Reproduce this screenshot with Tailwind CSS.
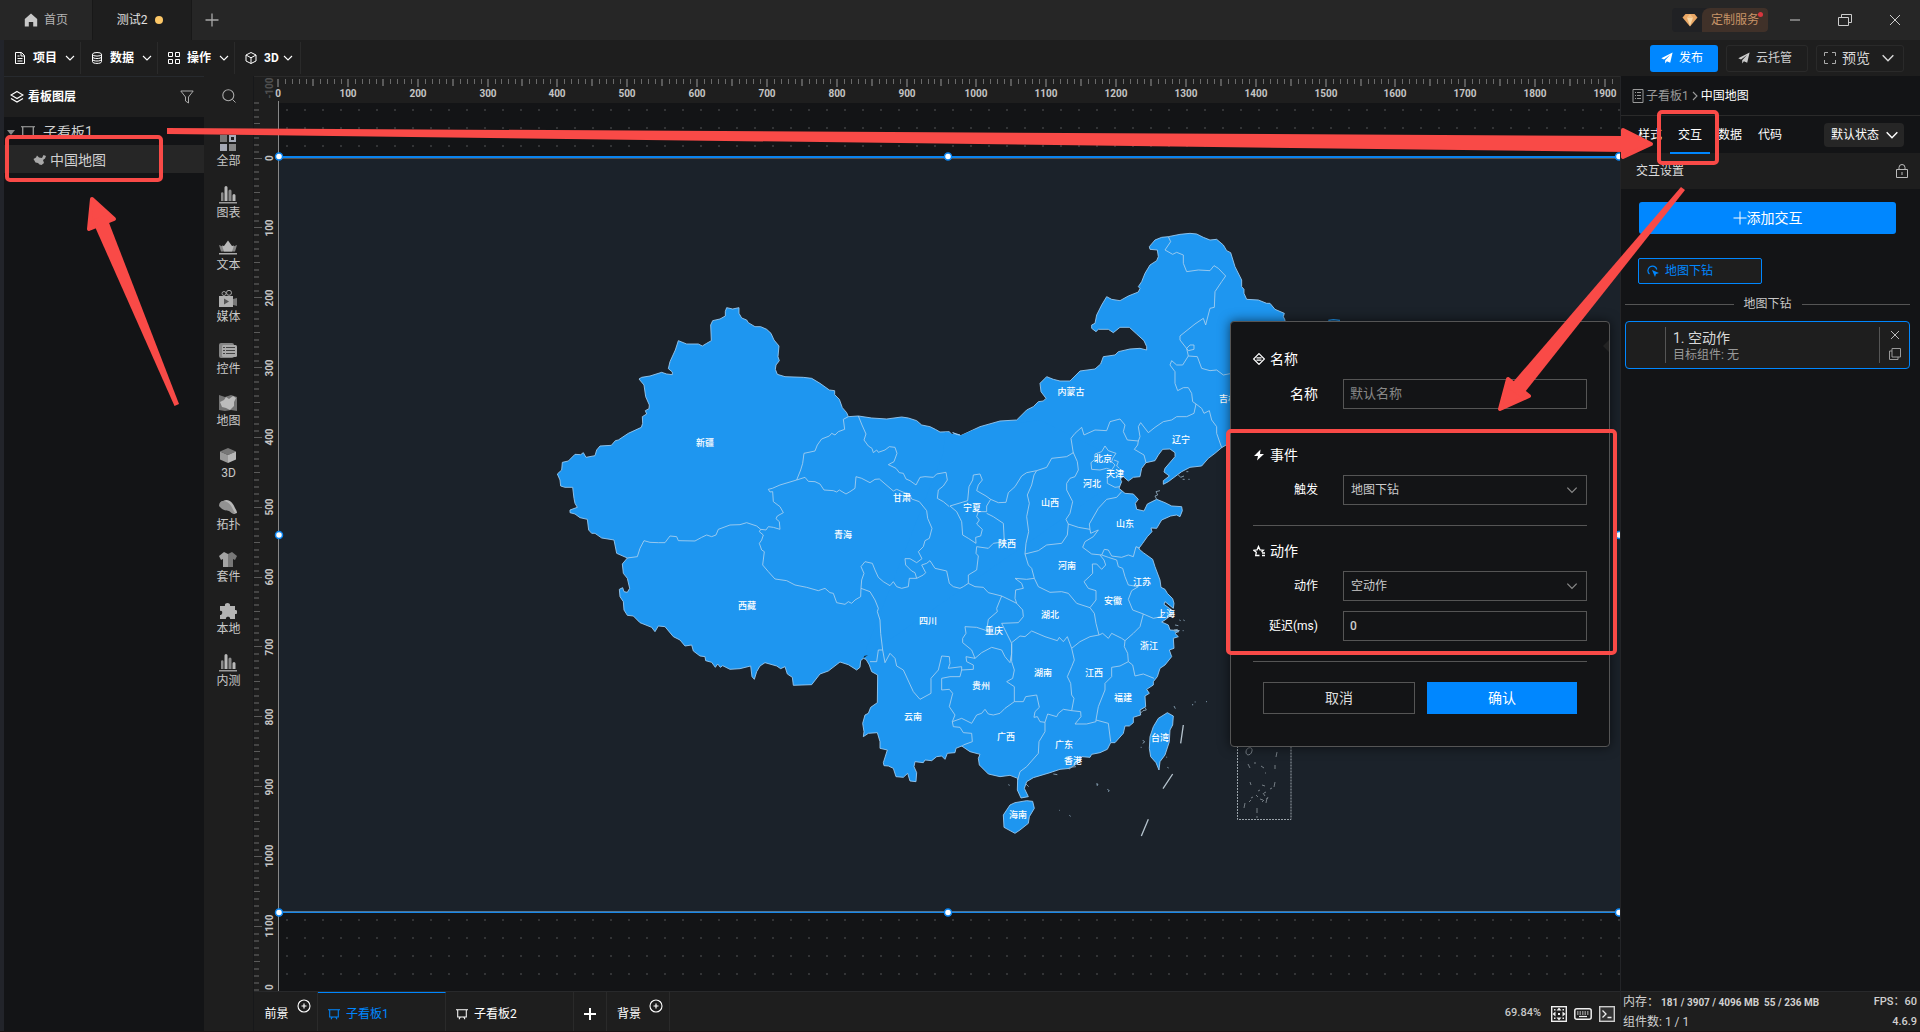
<!DOCTYPE html>
<html lang="zh-CN">
<head>
<meta charset="utf-8">
<title>测试2</title>
<script src="https://cdn.jsdelivr.net/npm/@tailwindcss/browser@4"></script>
</head>
<body class="relative flex h-screen flex-col overflow-hidden border-b border-[#1a1214] bg-[#1e1e1e] font-['Roboto','Noto_Sans_CJK_SC',sans-serif] text-xs text-[#e6e6e6]">

<svg class="hidden">
  <symbol id="chev" viewBox="0 0 12 12"><path d="M2 4l4 4 4-4" fill="none" stroke="currentColor" stroke-width="1.1"/></symbol>
  <symbol id="plane" viewBox="0 0 12 12"><path d="M11.6.5L.3 6.2l2.7 1.3L9 3 4.200 8.200v3.300l1.700-2.300 3.300 1.500z" fill="currentColor"/></symbol>
  <symbol id="board" viewBox="0 0 14 14"><path d="M0 2h14M2 2v8.500h10V2M5 10.500L3.500 13M9 10.500l1.500 2.500" fill="none" stroke="currentColor" stroke-width="1.200"/></symbol>
  <symbol id="plusring" viewBox="0 0 14 14"><circle cx="7" cy="7" r="6" fill="none" stroke="currentColor" stroke-width="1.100"/><path d="M7 4.500v5M4.500 7h5" stroke="currentColor" stroke-width="1.200"/></symbol>
  <symbol id="bars" viewBox="0 0 18 18"><path d="M0 16h18v1.500H0z" fill="#9a9a9a"/><path d="M2 15V7.500a1 1 0 0 1 2.500 0V15zM9.500 15V5a1 1 0 0 1 3 0v10z" fill="#8a8a8a"/><path d="M5.500 15V1.500a1.300 1.300 0 0 1 3 0V15zM13.500 15V9.500a1.200 1.200 0 0 1 3 0V15z" fill="#b8b8b8"/></symbol>
</svg>

<!-- Title bar -->
<header class="flex h-10 shrink-0 items-stretch bg-[#262626]">
  <button class="flex w-[92px] items-center justify-center gap-1.5 text-[#b4b4b4]">
    <svg class="size-3.5" viewBox="0 0 14 14"><path d="M7 .5L.8 6v7.500h4V9h4.400v4.500h4V6z" fill="#c8c8c8"/></svg>首页
  </button>
  <button class="flex w-[100px] items-center justify-center gap-2 border-x border-[#181818] bg-[#1e1e1e] pr-1 text-[#e0e0e0]">
    测试2<span class="size-2 rounded-full bg-[#fcc767]"></span>
  </button>
  <button aria-label="新建" class="flex w-10 items-center justify-center text-[#a8a8a8]">
    <svg class="size-3.5" viewBox="0 0 14 14"><path d="M7 .5v13M.5 7h13" stroke="currentColor" stroke-width="1.300"/></svg>
  </button>
  <div class="ml-auto flex items-center">
    <a href="#" class="relative mr-0.5 flex h-6 items-center overflow-hidden rounded bg-[#202124] text-[#c89468]">
      <svg class="mr-1 ml-2.5 h-3.5 w-4" viewBox="0 0 16 14"><path d="M3.500 1h9L15.500 4.500 8 13.500.5 4.500z" fill="#e9a765"/><path d="M5 4.500h6L8 13z" fill="#f9d7a5"/><path d="M5 4.500L8 1l3 3.500z" fill="#f4c083"/></svg>
      <span class="flex h-6 w-[66px] items-center justify-center rounded-tl-lg bg-[#403129]">定制服务</span>
      <span class="absolute top-1 right-[5px] size-[5px] rounded-full bg-[#d9363e]"></span>
    </a>
    <button aria-label="最小化" class="flex w-[50px] justify-center"><svg class="size-3" viewBox="0 0 12 12"><path d="M1 6h10" stroke="#ccc"/></svg></button>
    <button aria-label="还原" class="flex w-[50px] justify-center"><svg class="size-4" viewBox="0 0 16 16"><path d="M1.500 5.500h10v8h-10zM4.500 5.500v-3h10v8h-3" fill="none" stroke="#ccc"/></svg></button>
    <button aria-label="关闭" class="flex w-[50px] justify-center"><svg class="size-3" viewBox="0 0 12 12"><path d="M1 1l10 10M11 1L1 11" stroke="#ccc"/></svg></button>
  </div>
</header>

<!-- Menu bar -->
<nav class="flex h-9 shrink-0 items-center border-l-4 border-[#22242a]">
  <button class="flex h-8 w-[77px] items-center gap-[7px] border-r border-[#2a2a2a] pl-2.5 font-bold text-white">
    <svg class="size-3" viewBox="0 0 12 12"><path d="M1.500.5h6l3 3v8h-9zM7 .5V4h3.500M3.500 4h2M3.500 6.500h5M3.500 9h5" fill="none" stroke="currentColor"/></svg>项目<svg class="size-3"><use href="#chev"/></svg>
  </button>
  <button class="flex h-8 w-[77px] items-center gap-[7px] border-r border-[#2a2a2a] pl-2.5 font-bold text-white">
    <svg class="size-3" viewBox="0 0 12 12"><g fill="none" stroke="currentColor"><ellipse cx="6" cy="2.300" rx="4.500" ry="1.800"/><path d="M1.500 2.300v7.400c0 2.300 9 2.300 9 0V2.300M1.500 4.800c0 2.300 9 2.300 9 0M1.500 7.300c0 2.300 9 2.300 9 0"/></g></svg>数据<svg class="size-3"><use href="#chev"/></svg>
  </button>
  <button class="flex h-8 w-[77px] items-center gap-[7px] border-r border-[#2a2a2a] pl-2.5 font-bold text-white">
    <svg class="size-3" viewBox="0 0 12 12"><path d="M.5.5h4v4h-4zM7.500.5h4v4h-4zM.5 7.500h4v4h-4zM7.500 7.500h4v4h-4z" fill="none" stroke="currentColor"/></svg>操作<svg class="size-3"><use href="#chev"/></svg>
  </button>
  <button class="flex h-8 w-[66px] items-center gap-[7px] border-r border-[#2a2a2a] pl-2.5 font-bold text-white">
    <svg class="size-3" viewBox="0 0 12 12"><path d="M6 .5L11 3v6l-5 2.500L1 9V3zM1 3l5 2.800L11 3M6 5.800v5.700" fill="none" stroke="currentColor"/></svg>3D<svg class="-ml-1 size-3"><use href="#chev"/></svg>
  </button>
  <div class="mr-4 ml-auto flex gap-2">
    <button class="flex h-[27px] w-[68px] items-center justify-center gap-1.5 rounded-[3px] bg-[#0087ff] pr-1 text-white"><svg class="size-3"><use href="#plane"/></svg>发布</button>
    <button class="flex h-[27px] w-[82px] items-center justify-center gap-1.5 rounded-[3px] border border-[#2a2a2a] pr-1 text-[#ccc]"><svg class="size-3"><use href="#plane"/></svg>云托管</button>
    <button class="flex h-[27px] w-[88px] items-center justify-center gap-1.5 rounded-[3px] border border-[#2a2a2a] text-sm text-[#d8d8d8]"><svg class="size-3" viewBox="0 0 12 12"><path d="M.5 4V.5H4M8 .5h3.500V4M11.500 8v3.500H8M4 11.500H.5V8" fill="none" stroke="#aaa"/></svg>预览<svg class="ml-1 size-4"><use href="#chev"/></svg></button>
  </div>
</nav>

<div class="flex min-h-0 flex-1">
  <!-- Layers panel -->
  <aside class="w-[204px] shrink-0 border-l-4 border-[#22242a] bg-[#131416]">
    <div class="flex h-[41px] items-center border-t border-[#272a2e] bg-[#1e1e1e] px-1.5 font-bold text-white">
      <svg class="mr-1 size-3.5" viewBox="0 0 14 14"><path d="M7 1.500l6 3.500-6 3.500L1 5zM1 8.500L7 12l6-3.500" fill="none" stroke="currentColor" stroke-width="1.200"/></svg>看板图层
      <svg class="mr-1 ml-auto size-3.5" viewBox="0 0 14 14"><path d="M.8 1h12.400L8.500 7v6l-3-2V7z" fill="none" stroke="#aaa"/></svg>
    </div>
    <ul class="text-sm text-[#d0d0d0]">
      <li class="flex h-7 items-center pt-0.5 pl-[3px]"><svg class="mr-1.5 size-2" viewBox="0 0 8 8"><path d="M0 2h8L4 7z" fill="#888"/></svg><svg class="mr-2 size-3.5" viewBox="0 0 12 12"><path d="M0 1.500h12M1.500 1.500v8h9v-8M4 10l-1 2M8 10l1 2" fill="none" stroke="#aaa"/></svg>子看板1</li>
      <li class="flex h-7 items-center gap-[3px] bg-[#262626] pt-0.5 pl-[29px]"><svg class="size-3.5" viewBox="0 0 14 12"><path d="M.5 5l2.500-1.500L4 1.500l2 2 3 .5 1.500-3L13 2l-1 2.500-2 1.500 1 3-2.500 2-2-.5L5 9 2.500 8.500z" fill="#a8a8a8"/></svg>中国地图</li>
    </ul>
  </aside>

  <!-- Component categories -->
  <nav class="flex w-[50px] shrink-0 flex-col items-center border-r border-[#17181a] text-[#c8c8c8]">
    <button aria-label="搜索" class="flex h-10 items-center"><svg class="size-3.5" viewBox="0 0 14 14"><circle cx="6.300" cy="6.300" r="5.500" fill="none" stroke="#aaa" stroke-width="1.100"/><path d="M10.500 10.500l3 3" stroke="#aaa"/></svg></button>
    <div class="mt-[18px] flex flex-col">
      <a href="#" class="flex h-[52px] flex-col items-center"><svg class="mb-px size-[18px]" viewBox="0 0 18 18"><path d="M1 1h7v7H1z" fill="#777"/><path d="M11 2h5v5h-5z" fill="#1e1e1e" stroke="#a8adba" stroke-width="2"/><path d="M1 10h7v7H1z" fill="#a4a8b4"/><path d="M10 10h7v7h-7z" fill="#888"/></svg>全部</a>
      <a href="#" class="flex h-[52px] flex-col items-center"><svg class="mb-px size-[18px]"><use href="#bars"/></svg>图表</a>
      <a href="#" class="flex h-[52px] flex-col items-center"><svg class="mb-px size-[18px]" viewBox="0 0 18 18"><path d="M0 7l5 2 8 0 5-2-2 6.500H2z" fill="#858585"/><path d="M9 2.500l4 5.500 2-.5-2 6H5L3 7.500l2 .5z" fill="#b8b8b8"/><path d="M0 15h18v1.500H0z" fill="#aaa"/></svg>文本</a>
      <a href="#" class="flex h-[52px] flex-col items-center"><svg class="mb-px size-[18px]" viewBox="0 0 18 18"><circle cx="5" cy="3.500" r="2" fill="none" stroke="#999"/><circle cx="10" cy="2.800" r="2.500" fill="none" stroke="#aaa"/><path d="M0 6h14v11H0z" fill="#b0b0b0"/><path d="M14 9l4-1v8l-4-1z" fill="#777"/><path d="M5 8.500v6l5-3z" fill="#555"/></svg>媒体</a>
      <a href="#" class="flex h-[52px] flex-col items-center"><svg class="mb-px size-[18px]" viewBox="0 0 18 18"><rect y="1" width="15" height="15" rx="2" fill="#858585"/><rect x="3" y="3" width="15" height="12" rx="1.500" fill="#aaa"/><path d="M4 5.500h2M7 5.500h9M4 8.500h2M7 8.500h9M4 11.500h2M7 11.500h9" stroke="#444"/></svg>控件</a>
      <a href="#" class="flex h-[52px] flex-col items-center"><svg class="mb-px size-[18px]" viewBox="0 0 18 18"><path d="M0 1l6 2 6-2 6 2v14l-6-1-6 1-6-1z" fill="#747474"/><path d="M1 8l4-2 2-3 3 2 4-3 3 2-2 4 0 4-4 4-4-2-4-1z" fill="#bcbcbc"/></svg>地图</a>
      <a href="#" class="flex h-[52px] flex-col items-center"><svg class="mb-px size-[18px]" viewBox="0 0 18 18"><path d="M9 2l8 3.500L9 9 1 5.500z" fill="#777"/><path d="M1 5.500L9 9v8l-8-3.500z" fill="#999"/><path d="M17 5.500L9 9v8l8-3.500z" fill="#b8b8b8"/></svg>3D</a>
      <a href="#" class="flex h-[52px] flex-col items-center"><svg class="mb-px size-[18px]" viewBox="0 0 18 18"><path d="M4 3c6-3 10 2 12 7 1 2 2 3 2 5l-3 1L2 4z" fill="#b8b8b8"/><path d="M0 8c0-5 4-6 8-4 4 2 5 6 8 11-3 2-4-1-6-2-3-1-6 0-10-5z" fill="#929292"/></svg>拓扑</a>
      <a href="#" class="flex h-[52px] flex-col items-center"><svg class="mb-px size-[18px]" viewBox="0 0 18 18"><path d="M5 2l4 2v13H4V9L2 10 0 6z" fill="#a4a4a4"/><path d="M13 2L9 4v13h5V9l2 1 2-4z" fill="#787878"/></svg>套件</a>
      <a href="#" class="flex h-[52px] flex-col items-center"><svg class="mb-px size-[18px]" viewBox="0 0 18 18"><path d="M1 4h5c-1-4 6-4 5 0h5v4c3-1 3 5 0 4v5h-5c1-3-5-3-4 0H1v-4c3 0 3-5 0-4z" fill="#b4b4b4"/></svg>本地</a>
      <a href="#" class="flex h-[52px] flex-col items-center"><svg class="mb-px size-[18px]"><use href="#bars"/></svg>内测</a>
    </div>
  </nav>

  <!-- Canvas column -->
  <main class="relative flex min-w-0 flex-1 flex-col">
    <div class="relative min-h-0 flex-1 overflow-hidden border-t border-[#2a2a2a]">
      <svg class="absolute -top-px left-0 h-[915px] w-[1366px]" viewBox="254 76 1366 915">
        <defs>
          <pattern id="dots" x="286" y="109" width="18" height="18" patternUnits="userSpaceOnUse"><rect width="2" height="2" fill="#333436"/></pattern>
        </defs>
        <rect x="278" y="103" width="1342" height="888" fill="#131416"/>
        <rect x="278" y="103" width="1342" height="888" fill="url(#dots)"/>
        <rect x="278" y="156" width="1342" height="757" fill="#1b222a"/>
        <path d="M278 158.500h1342" stroke="#555"/>
        <path d="M278 157h1342" stroke="#0a84f0" stroke-width="2"/>
        <path d="M278 911.500h1342" stroke="#4f7699"/>
        <path d="M278 912.500h1342" stroke="#1787e8"/>
        <g id="ruler" class="font-['Roboto',sans-serif] text-[10px] font-bold" fill="#c4c4c4" text-anchor="middle"></g>
        <path d="M278.500 101v890" stroke="#888"/>

        <!-- Map of China -->
        <g stroke="#9ccdf5" stroke-width="2.600" stroke-linejoin="round" fill="#1e96f0">
          <g transform="translate(540 290) scale(.33333)">
            <path d="M1260,435 1235,434 1228,425 1200,426 1186,418 1170,410 1145,405 1130,392 1105,384 1085,381 1040,387 995,384 955,378 925,380 920,368 907,353 898,328 884,314 884,302 868,300 840,280 815,265 790,262 735,260 712,253 706,238 708,225 718,212 714,200 717,168 702,150 693,130 680,118 662,110 645,110 625,98 620,90 605,84 597,70 597,53 578,57 560,53 556,64 556,78 540,87 518,92 512,105 514,152 500,160 487,168 475,162 440,162 415,152 406,180 390,215 385,236 397,246 397,254 380,252 365,247 330,258 305,262 297,267 312,285 317,320 328,345 327,356 316,362 320,372 307,380 308,400 304,412 265,430 235,450 226,452 214,466 180,468 170,480 165,497 138,502 130,488 122,494 105,493 85,513 67,517 65,540 52,552 60,570 62,588 75,592 98,592 102,625 105,640 112,652 90,660 90,668 105,672 120,683 142,688 146,720 155,730 165,730 185,744 222,750 230,790 262,804 247,822 250,850 262,865 269,895 262,907 252,905 248,893 238,898 240,920 250,935 252,960 262,976 280,978 300,998 335,1012 345,1025 355,1008 375,1010 400,1040 420,1050 435,1068 455,1065 460,1083 480,1098 495,1100 497,1112 515,1117 526,1132 533,1122 541,1132 548,1127 570,1138 600,1136 632,1128 636,1160 643,1168 650,1145 660,1128 675,1118 710,1128 722,1136 735,1130 742,1152 757,1162 760,1186 815,1184 840,1152 865,1143 900,1116 925,1124 950,1140 960,1132 962,1112 970,1105"/>
          </g>
          <g transform="translate(1040 220) scale(.33333)">
            <path d="M-240,645 -262,638 -240,648 -180,620 -120,603 -70,600 -40,570 -20,560 -5,545 10,543 18,535 3,515 0,490 20,470 40,478 60,483 90,483 120,453 165,447 182,432 190,410 225,405 235,395 270,387 300,385 320,390 320,380 312,362 290,342 268,322 240,322 220,338 205,328 175,328 168,335 155,325 155,315 165,310 170,285 185,255 200,230 215,238 240,242 265,228 295,216 300,205 295,200 305,185 315,160 330,135 350,122 355,110 352,90 330,88 328,80 345,60 365,52 385,50 420,43 450,40 470,42 490,52 510,60 530,58 550,75 560,92 572,98 585,140 605,180 605,200 612,208 612,220 620,238 655,240 680,250 690,250 705,268 733,280 730,290 735,300 735,500 600,650 545,683 525,700 505,715 485,738 450,742 425,755 405,770 385,785 370,793 370,782 388,768 372,756 375,745 405,710 405,698 390,687 368,688 355,705 345,722 318,728 305,745 300,770 280,772 265,783 250,770 240,775"/>
          </g>
          <g transform="translate(860 420) scale(.33333)">
            <path stroke="none" d="M10,708 250,100 255,36 300,47 340,30 540,0 740,100 785,175 700,400 60,700z"/>
            <path d="M780,175 785,185 777,205 795,220 820,222 835,238 826,250 830,268 852,273 862,252 890,238 915,248 935,258 965,260 967,272 960,290 950,285 932,288 905,300 890,325 873,324 876,335 862,350 848,370 836,386 850,398 878,418 885,440 900,480 903,502 915,508 922,520 938,536 942,550 940,565 915,545 912,553 942,575 940,580 915,600 905,606 925,615 930,630 958,632 945,640 955,650 940,655 942,685 928,690 935,710 915,735 900,745 892,770 880,785 880,795 860,808 868,820 855,828 857,860 840,870 842,885 820,892 820,908 808,918 795,918 790,940 765,968 752,968 742,988 720,998 695,1003 690,1012 665,1010 660,1025 630,1045 600,1048 570,1058 520,1073 500,1085 493,1105 505,1130 483,1134 472,1110 473,1075 450,1066 420,1070 385,1062 358,1035 355,1015 360,1003 330,995 305,978 288,985 285,998 262,1000 255,1018 245,1008 230,1010 215,1022 195,1020 190,1028 165,1025 162,1040 170,1058 168,1085 150,1083 143,1060 130,1072 108,1070 100,1045 85,1038 72,1037 70,1028 82,990 60,985 60,965 52,938 25,940 10,950 12,935 8,910 15,885 25,880 32,862 52,848 53,765 35,755 28,735 18,718 10,715"/>
            <path d="M500,1142 518,1144 523,1165 508,1190 505,1210 480,1230 465,1240 432,1222 430,1185 450,1155 465,1148z"/>
            <path d="M922,878 940,888 938,915 930,930 928,965 915,1005 900,1025 897,1050 888,1028 872,1010 868,985 870,950 880,920 895,895z"/>
            <path fill="none" stroke="#b4c2cc" stroke-width="4" d="M970,915 962,970M938,1062 909,1106M865,1198 844,1248"/>
            <g fill="none" stroke="#8fa9bd">
              <path d="M890,238 885,228 893,225 888,215 900,212M955,165 962,172 972,168M968,178l6,0M985,178l4,0M985,155l-6,0M958,600l4,2M970,600l4,2M945,615l10,2M942,630l10,-2 4,8 -10,0zM968,632l3,0M942,858l4,8M998,852l0,4M1004,846l3,0M1038,845l3,0M848,960l6,6 -6,4M842,982l3,0M920,1010l0,3M922,1042l4,2M708,1092l6,0 -3,6M742,1108l6,4 -4,3M628,1186l4,3M598,1171l2,0M580,1062l12,2M628,1048l0,-6 20,-2M498,1092l8,8M445,1094l4,2M855,862l4,8 -10,2 -8,8"/>
            </g>
          </g>
        </g>
        <!-- Province borders -->
        <g fill="none" stroke="#a9cfee" stroke-width="2.600" stroke-linejoin="round">
          <path transform="translate(540 290) scale(.33333)" d="M925,380 910,388 914,418 895,425 885,435 875,430 868,438 845,447 832,465 825,483 792,490 788,520 782,540 770,570M770,570 720,585 697,595 685,598 690,606 698,605 700,635 720,650 730,668 712,678 708,686 718,695 720,718 700,712 685,710 678,720 662,718M955,378 966,405 978,432 972,450 985,468 996,475 1000,488 1010,480 1015,487 1035,480 1048,470 1065,472 1071,490 1062,515 1045,524 1068,535 1078,548 1090,550 1098,567 1110,572 1128,585 1140,562 1155,560 1180,562 1190,552 1218,547 1222,570 1210,588 1195,600 1192,625 1210,635 1228,650M770,570 795,562 805,574 825,575 840,582 852,600 880,602 890,606 898,600 918,612 930,605 945,595 948,560 965,565 990,578 1005,568 1018,567 1060,603 1070,598 1110,615 1115,627 1138,635 1160,662 1163,685 1176,715 1168,745 1155,752 1150,770 1135,785 1146,806 1130,818 1110,806 1095,806 1097,825 1115,843 1125,848 1130,865 1150,855 1157,848 1145,825 1160,820 1170,812 1185,835 1220,843 1228,880 1240,890 1260,895M662,718 650,708 620,698 600,704 570,705 535,718 528,735 515,740 500,735 485,742 465,753 415,752 410,740 390,738 375,758 355,758 330,757 312,752 300,775 292,800 262,804M662,718 658,725 670,735 665,750 658,760 665,780 673,785 668,825 685,845 705,867 740,872 765,885 800,892 835,902 855,895 870,908 880,910 890,938 915,943 925,935 935,940 945,930 962,920 963,895M963,895 965,870 972,850 963,830 975,815 997,820 1005,840 1015,862 1030,875 1050,887 1060,875 1070,890 1085,895 1105,890 1108,865 1130,865M963,895 990,905 1005,930 1015,955 1012,965 1020,990 1022,1030 1028,1080M1028,1080 1015,1080 1010,1115 990,1115"/>
          <path transform="translate(860 420) scale(.33333)" d="M270,258 323,242 327,200 338,180 340,165 360,162 367,180 355,195 350,212 378,228 392,238 380,258 380,275 355,275 350,290 358,300 350,312 367,328 362,348 347,352 348,370 325,355 308,345 305,305 290,275 270,258M392,238 415,248 438,247 445,218 465,200 485,168 500,158 530,152M530,152 522,165 515,195 502,225 508,250 500,290 506,335 498,370 495,402M530,152 560,142 575,115 620,110 640,98M380,280 400,290 430,310 433,365 400,370 385,385 350,380 348,400 355,408 350,450 325,465 325,490M300,505 310,500 325,490 345,500 370,502 385,518 425,528 450,540 470,550M470,550 465,535 467,510 490,505 485,490 465,475 500,478 523,475M495,402 505,435 515,445 523,475M495,402 535,392 560,375 605,370 622,345 625,312M640,98 652,125 655,150 645,170 630,175 620,190 620,210 638,245 630,280 618,298 625,312M625,312 655,322 690,328 688,312 715,265 740,238 770,232 785,215M690,328 692,340 715,330 700,350 675,365 668,382 695,402 725,405M725,405 733,388 745,390 755,408 785,412 805,405 820,410 828,380 840,385M523,475 535,500 570,517 605,515 625,520 650,550 690,563M690,563 708,540 708,512 685,505 672,485 688,470 698,460 697,432 710,432 725,448 737,435 732,420 720,405M725,405 745,412 770,420 775,440 788,445 795,470 805,495 835,500 815,512 805,538 818,570 850,582M850,582 880,595 905,590 915,578M850,582 840,620 820,640 795,662M690,563 703,580 708,610 717,645M717,645 728,640 745,655 755,640 785,655 795,662M717,645 690,650 660,665 635,685M635,685 622,650 610,665 598,652 592,662 555,650 515,633 495,650 480,648 455,668M470,550 488,570 490,590 475,608 425,610 455,670 455,700 450,728 435,710 425,690 395,682 365,698 345,715 335,690 308,668 308,655 318,640 315,620 350,622 380,632 385,598 412,575 410,565 425,528M795,662 793,680 803,700 805,725M805,725 818,735 825,768 850,762 882,775M805,725 780,738 755,742 755,770 735,790 735,810 715,860 708,900M635,685 643,720 635,740 622,770 632,790 635,825 642,835 635,872M635,872 662,875 663,890 645,912 680,912 708,905 708,900M708,900 745,910 752,965M635,872 610,868 595,880 590,890 563,882 555,907M555,907 540,905 532,890 522,892 525,875 538,862 530,825 497,830 490,845 463,845M455,670 455,725 463,750 458,775 440,785 463,800 463,845M463,845 435,865 420,880 400,885 385,882 375,868 365,880 350,885 335,910 305,895 277,905M555,907 555,935 537,965 535,1000 500,1040 480,1055 473,1080M277,905 280,920 300,922 310,938 335,940 337,965 310,975 305,980M277,905 285,885 268,860 278,820 268,808 245,810 245,775 270,770 300,770 305,750M305,750 340,748 340,735 320,725 318,710 345,715M68,690 75,728 90,700 105,715 110,738 130,750 160,815 180,838 213,820 213,775 235,750 245,708 268,710 270,730 265,745 305,740 305,750M735,78 745,92 768,100 758,115 755,125 765,135 755,150 740,145 720,150 695,148 693,128 705,118 705,102 725,95 735,78M762,120 775,125 770,138 778,145M742,165 742,190 765,202 780,200"/>
          <path transform="translate(1040 220) scale(.33333)" d="M100,700 93,655 105,640 125,622 132,645 165,630 200,632 210,605 240,597 255,615 250,635 262,660 295,663 293,675 283,688 312,705 318,728M295,663 300,650 295,620 302,608 325,638 345,622 370,605 395,600 410,590 440,590 462,580 468,552M468,552 485,565 492,580 508,572 515,600 530,620 530,640 545,683M468,552 458,545 455,520 445,503 430,503 413,512 405,490 405,455 390,435 395,422 410,435 428,435 445,408M445,408 472,410 485,445 510,452 530,450 550,465 575,460M445,408 440,385 450,375 462,375 462,388 445,392 420,360 420,348 465,312 490,295 497,315 510,265 523,262 525,215 545,185 557,168 535,145 522,137 510,152 475,150 440,155 430,130 430,105 410,97 398,103 375,90 392,65 385,50"/>
          <path transform="translate(1040 220) scale(.33333)" stroke="#1e96f0" stroke-width="4" d="M865,301 880,299 900,301"/>
        </g>
        <!-- Inset of the South China Sea -->
        <g fill="none" stroke="#9aa3aa">
          <path d="M1237.500 740v79.500h53.500V740" stroke-dasharray="2 1"/>
          <path d="M1246 752c0-5 7-6 6-1s-6 5-6 1M1277 752l-1 5M1248 764l2 4M1275 765v4M1250 782l1 3M1275 782l-1 5M1245 803l-1 5M1257 808v5M1256 817h2M1254 763h2M1261 766l3 2M1265 773h1M1262 785l3 1M1258 791l2-1M1263 793l2 3M1251 798l2-1M1256 795l2 2M1260 799l3 1M1249 802l2-2M1262 802l2-2M1267 799l1-2M1264 793l2-1M1270 789l2-1M1266 803l1-5" opacity=".7"/>
        </g>
        <g id="provinces" class="font-['Noto_Sans_CJK_SC',sans-serif] text-[9px] font-medium" fill="#fff" text-anchor="middle"></g>

        <g fill="#fff" stroke="#0a84f0" stroke-width="1.500">
          <circle cx="279" cy="156.500" r="3.500"/><circle cx="948" cy="156.500" r="3.500"/><circle cx="1619" cy="156.500" r="3.500"/>
          <circle cx="279" cy="535" r="3.500"/><circle cx="1619" cy="535" r="3.500"/>
          <circle cx="279" cy="912.500" r="3.500"/><circle cx="948" cy="912.500" r="3.500"/><circle cx="1619" cy="912.500" r="3.500"/>
        </g>
        <rect x="254" y="103" width="24" height="888" fill="none"/>
      </svg>

      <!-- Interaction editor -->
      <form class="absolute top-[244px] right-[10px] w-[380px] rounded-sm border border-[#555] bg-[#131416] px-[22px] pt-[27px] pb-8 text-sm text-white shadow-[0_0_12px_rgba(0,0,0,0.6)]">
        <span class="absolute top-[18px] right-0 h-3 w-1.5 bg-[#222] [clip-path:polygon(100%_0,100%_100%,0_50%)]"></span>
        <section class="flex flex-col gap-2.5 border-b border-[#555] pb-5">
          <h2 class="flex h-5 items-center gap-[5px]"><svg class="size-3" viewBox="0 0 12 12"><path d="M6 .6L11.400 6 6 11.400.6 6zM3.500 4.800h5M3.500 7.200h5" fill="none" stroke="currentColor" stroke-width="1.200"/></svg>名称</h2>
          <div class="flex items-center"><label for="nm" class="mr-[25px] w-[65px] text-right">名称</label><input id="nm" placeholder="默认名称" class="h-[30px] min-w-0 flex-1 border border-[#555] bg-transparent px-1.5 pb-0.5 text-[13px] placeholder:text-[#888]"></div>
        </section>
        <section class="flex flex-col gap-2.5 border-b border-[#555] pt-[15px] pb-5">
          <h2 class="flex h-5 items-center gap-[5px]"><svg class="size-3" viewBox="0 0 12 12"><path d="M7.500.5L1 7h4L4 11.500 11 5H7z" fill="currentColor"/></svg>事件</h2>
          <div class="relative flex items-center"><label for="tg" class="mr-[25px] w-[65px] text-right text-xs">触发</label><select id="tg" class="h-[30px] min-w-0 flex-1 appearance-none border border-[#555] bg-transparent px-[7px] text-xs text-[#ccc]"><option>地图下钻</option></select><svg class="pointer-events-none absolute right-2 size-3.5 text-[#888]"><use href="#chev"/></svg></div>
        </section>
        <section class="flex flex-col gap-2.5 border-b border-[#555] pt-[15px] pb-5">
          <h2 class="flex h-5 items-center gap-[5px]"><svg class="size-3" viewBox="0 0 12 12"><path d="M6.500 10.500H2.700l.6-3.300L.8 5.200l3.300-.4L5.500 1.500 7 4.800l3.400.4L8.500 7M9 8h3M9 10.500h3" fill="none" stroke="currentColor" stroke-width="1.300"/></svg>动作</h2>
          <div class="relative flex items-center"><label for="ac" class="mr-[25px] w-[65px] text-right text-xs">动作</label><select id="ac" class="h-[30px] min-w-0 flex-1 appearance-none border border-[#555] bg-transparent px-[7px] text-xs text-[#ccc]"><option>空动作</option></select><svg class="pointer-events-none absolute right-2 size-3.5 text-[#888]"><use href="#chev"/></svg></div>
          <div class="flex items-center"><label for="dl" class="mr-[25px] w-[65px] text-right text-xs">延迟(ms)</label><input id="dl" value="0" class="h-[30px] min-w-0 flex-1 border border-[#555] bg-transparent px-1.5 text-xs font-medium text-[#ccc]"></div>
        </section>
        <div class="mt-5 flex gap-3 px-2.5">
          <button type="button" class="h-8 flex-1 border border-[#555] text-[#ddd]">取消</button>
          <button type="button" class="h-8 flex-1 bg-[#0087ff]">确认</button>
        </div>
      </form>
    </div>

    <!-- Board tabs -->
    <footer class="flex h-10 shrink-0 items-stretch border-t border-[#28292b] text-white">
      <button class="flex w-[64px] items-center justify-center gap-2 border-r border-[#2a2a2a] pt-1 pl-1">前景<svg class="mb-4 size-3.5"><use href="#plusring"/></svg></button>
      <button class="flex w-[128px] items-center gap-1.5 border-t border-r border-[#0087ff] border-r-[#2a2a2a] pt-1 pl-2.5 text-[#0087ff]"><svg class="size-3"><use href="#board"/></svg>子看板1</button>
      <button class="flex w-[128px] items-center gap-1.5 border-r border-[#2a2a2a] pt-1 pl-2.5"><svg class="size-3"><use href="#board"/></svg>子看板2</button>
      <button aria-label="添加子看板" class="flex w-[33px] items-center justify-center border-r border-[#2a2a2a] pt-1"><svg class="size-3.5" viewBox="0 0 14 14"><path d="M7 1v12M1 7h12" stroke="#fff" stroke-width="2"/></svg></button>
      <button class="flex w-[63px] items-center justify-center gap-2 border-r border-[#2a2a2a] pt-1 pl-1">背景<svg class="mb-4 size-3.5"><use href="#plusring"/></svg></button>
      <div class="mr-[5px] ml-auto flex items-center gap-[7px] pt-1">
        <span class="mr-[3px] text-[11px] font-medium text-[#c8c8c8]">69.84%</span>
        <svg class="size-4" viewBox="0 0 16 16"><rect x=".7" y=".7" width="14.600" height="14.600" fill="none" stroke="#eee" stroke-width="1.400"/><path d="M8 1.500l2.500 3h-5zM8 14.500l2.500-3h-5zM1.500 8l3-2.500v5zM14.500 8l-3-2.500v5zM7 7h2v2H7zM3 3h1.500v1.500H3zM11.500 3H13v1.500h-1.500zM3 11.500h1.500V13H3zM11.500 11.500H13V13h-1.500z" fill="#eee"/></svg>
        <svg class="h-3 w-[18px]" viewBox="0 0 18 12"><rect x=".8" y=".8" width="16.400" height="10.400" rx="2" fill="none" stroke="#eee" stroke-width="1.500"/><path d="M3 4h12M3 6h12" stroke="#eee" stroke-dasharray="1.500 1" stroke-width="1.200"/><path d="M5 8.500h8" stroke="#eee" stroke-width="1.200"/></svg>
        <svg class="size-4" viewBox="0 0 16 16"><rect x=".7" y=".7" width="14.600" height="14.600" fill="#333" stroke="#ccc" stroke-width="1.400"/><path d="M3.500 4.500L7 8l-3.500 3.500M8.500 11.500h4" fill="none" stroke="#eee" stroke-width="1.300"/></svg>
      </div>
    </footer>
  </main>

  <!-- Properties panel -->
  <aside class="flex w-[300px] shrink-0 flex-col border-l border-[#232427] bg-[#131416]">
    <div class="flex h-10 items-center gap-0.5 border-b border-[#2a2a2a] pl-[11px] text-[#999]">
      <svg class="h-3.5 w-3" viewBox="0 0 12 14"><path d="M1 .5h10v13H1zM3 3.500h1M5 3.500h4M3 6.500h1M5 6.500h4M3 9.500h1M5 9.500h4" fill="none" stroke="currentColor"/></svg>子看板1<svg class="-mx-0.5 size-3 -rotate-90"><use href="#chev"/></svg><span class="text-white">中国地图</span>
    </div>
    <div class="flex h-[37px] items-center gap-4 pr-4 pl-[17px] text-white">
      <a href="#">样式</a>
      <a href="#" class="relative">交互<span class="absolute -inset-x-2 top-[25px] h-0.5 bg-[#0087ff]"></span></a>
      <a href="#">数据</a>
      <a href="#">代码</a>
      <div class="relative ml-auto flex items-center"><select aria-label="状态" class="h-6 w-20 appearance-none rounded-sm bg-[#262626] pl-[7px]"><option>默认状态</option></select><svg class="pointer-events-none absolute right-1 size-4"><use href="#chev"/></svg></div>
    </div>
    <div class="flex h-9 items-center justify-between bg-[#1e1e1e] pr-3 pl-[15px] text-[#ddd]">交互设置
      <svg class="h-3.5 w-3" viewBox="0 0 12 14"><path d="M.5 5.500h11v8H.5zM3 5.500V3.500a3 3 0 0 1 6 0v2" fill="none" stroke="#bbb"/><path d="M6 8v3" stroke="#bbb"/></svg>
    </div>
    <button class="mx-[18px] mt-[13px] mr-6 flex h-8 shrink-0 items-center justify-center rounded-[3px] bg-[#0087ff] text-sm text-white"><svg class="size-3.5" viewBox="0 0 14 14"><path d="M7 .5v13M.5 7h13" stroke="currentColor"/></svg>添加交互</button>
    <button class="mt-6 ml-[17px] flex h-[26px] w-[124px] shrink-0 items-center gap-1.5 rounded-xs border border-[#0087ff] bg-[#1e1e1e] pl-2 text-[#0087ff]">
      <svg class="size-3" viewBox="0 0 12 12"><path d="M2.500 9A4.500 4.500 0 1 1 9.800 4.500" fill="none" stroke="currentColor" stroke-width="1.200"/><path d="M5 5l7 3-3 1-1 3z" fill="currentColor"/></svg>地图下钻
    </button>
    <div class="mt-3 mr-2.5 ml-1 flex items-center gap-2.5 text-[#c8c8c8]"><span class="h-px flex-1 bg-[#555]"></span>地图下钻<span class="h-px flex-1 bg-[#555]"></span></div>
    <article class="mt-[9px] mr-2.5 ml-1 flex h-12 shrink-0 items-center rounded border border-[#0087ff] bg-[#1e1e1e] pl-[39px]">
      <div class="flex h-9 flex-1 flex-col justify-center border-x border-[#555] pt-px pl-[7px]"><h3 class="text-sm leading-[18px] text-[#d8d8d8]">1. 空动作</h3><p class="leading-4 text-[#999]">目标组件: 无</p></div>
      <div class="flex w-[29px] flex-col items-center gap-2">
        <button aria-label="删除" class="flex"><svg class="size-2.5" viewBox="0 0 10 10"><path d="M1 1l8 8M9 1L1 9" stroke="#bbb"/></svg></button>
        <button aria-label="复制" class="flex"><svg class="size-3" viewBox="0 0 12 12"><path d="M3 .5h8.500V9H3zM3 3H.5v8.500H9V9" fill="none" stroke="#999"/></svg></button>
      </div>
    </article>
    <div class="mt-auto flex h-10 flex-col justify-between border-t border-[#28292b] bg-[#1e1e1e] pr-[3px] pl-0.5 text-[#d0d0d0]">
      <p class="flex justify-between leading-5"><span>内存：<span class="ml-0.5 text-[10px] font-bold">181 / 3907 / 4096 MB&nbsp; 55 / 236 MB</span></span><span class="text-[11px] font-medium">FPS：60</span></p>
      <p class="flex justify-between leading-[18px]"><span>组件数: 1 / 1</span><span class="text-[11px] font-medium">4.6.9</span></p>
    </div>
  </aside>
</div>

<!-- Tutorial annotations -->
<svg class="pointer-events-none absolute top-0 left-0 h-[1032px] w-[1920px]" viewBox="0 0 1920 1032">
  <g fill="none" stroke="#f94a47" stroke-width="4"><rect x="7" y="137" width="154" height="43" rx="3"/><rect x="1659" y="112" width="58" height="51" rx="3"/><rect x="1228" y="431" width="387" height="222" rx="3"/></g>
  <g fill="#f94a47" stroke="#f94a47" stroke-width="4" stroke-linejoin="round">
    <path d="M92 199L114 219 89 229z"/><path d="M1623 130L1651 144 1623 157z"/><path d="M1500 409L1508 379 1529 396z"/>
  </g>
  <g fill="#f94a47"><path d="M167 128L1624 136V152L167 134z"/><path d="M92 220L106 215 179 404 174.500 406z"/><path d="M1508 388L1681 187 1685 190 1521 397z"/></g>
</svg>

<script>
  const NS = 'http://www.w3.org/2000/svg';
  const put = (parent, tag, attrs, text) => {
    const el = document.createElementNS(NS, tag);
    for (const k in attrs) el.setAttribute(k, attrs[k]);
    if (text !== undefined) el.textContent = text;
    parent.appendChild(el);
  };
  const ruler = document.getElementById('ruler');
  const unit = 6.984;
  for (let i = 0; i <= 192; i++) {
    const len = i % 10 === 0 ? 8 : i % 5 === 0 ? 7 : 5;
    const x = Math.round(278 + i * unit);
    if (x < 1619) put(ruler, 'rect', { x: i % 5 ? x : x - 1, y: 79, width: i % 5 ? 1 : 2, height: len, fill: i % 5 ? '#6a6a6a' : '#5a5a5a' });
    if (i % 10 === 0) put(ruler, 'text', { x: x, y: 97 }, i * 10);
  }
  for (let i = -8; i <= 119; i++) {
    const y = Math.round(157.5 + i * unit);
    put(ruler, 'rect', { x: 254, y: y, width: i % 10 === 0 ? 8 : i % 5 === 0 ? 6 : 5, height: i % 5 ? 2 : 1, fill: i % 5 ? '#444' : '#5a5a5a' });
  }
  for (let i = -1; i <= 11; i++) {
    const y = Math.round(158 + i * 69.84);
    put(ruler, 'text', { transform: `translate(273 ${y}) rotate(-90)`, opacity: i < 0 ? 0.3 : 1 }, i * 100);
  }
  put(ruler, 'text', { transform: 'translate(273 987) rotate(-90)' }, 0);
  const names = [['新疆',705,443],['西藏',747,606],['青海',843,535],['甘肃',902,498],['内蒙古',1071,392],['辽宁',1181,440],['吉林',1228,399],['北京',1103,459],['天津',1115,474],['河北',1092,484],['山西',1050,503],['宁夏',972,508],['山东',1125,524],['陕西',1007,544],['河南',1067,566],['江苏',1142,582],['安徽',1113,601],['上海',1166,614],['湖北',1050,615],['四川',928,621],['重庆',994,631],['浙江',1149,646],['湖南',1043,673],['江西',1094,673],['贵州',981,686],['福建',1123,698],['云南',913,717],['广西',1006,737],['广东',1064,745],['台湾',1160,738],['香港',1073,761],['海南',1018,815]];
  for (const [n, x, y] of names) put(document.getElementById('provinces'), 'text', { x: x, y: y + 3 }, n);
</script>
</body>
</html>
